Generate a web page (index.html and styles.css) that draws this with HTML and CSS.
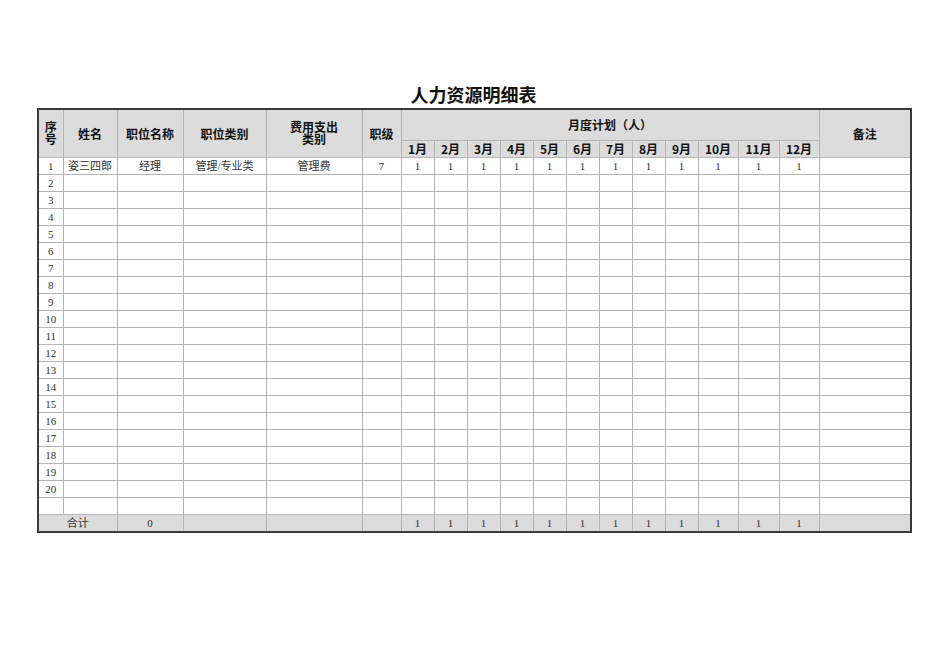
FILE: index.html
```html
<!DOCTYPE html>
<html lang="zh">
<head>
<meta charset="utf-8">
<title>人力资源明细表</title>
<link rel="stylesheet" href="styles.css">
</head>
<body>
<div class="page">
  <h1 class="title">人力资源明细表</h1>
  <table class="sheet">
    <colgroup>
      <col class="c-no"><col class="c-name"><col class="c-pos"><col class="c-cat"><col class="c-fee"><col class="c-lvl">
      <col class="c-m"><col class="c-m"><col class="c-m"><col class="c-m"><col class="c-m"><col class="c-m"><col class="c-m"><col class="c-m"><col class="c-m">
      <col class="c-m2"><col class="c-m3"><col class="c-m2">
      <col class="c-note">
    </colgroup>
    <thead>
      <tr class="h1">
        <th rowspan="2" class="tight">序<br>号</th>
        <th rowspan="2">姓名</th>
        <th rowspan="2">职位名称</th>
        <th rowspan="2">职位类别</th>
        <th rowspan="2" class="tight">费用支出<br>类别</th>
        <th rowspan="2">职级</th>
        <th colspan="12">月度计划（人）</th>
        <th rowspan="2">备注</th>
      </tr>
      <tr class="h2">
        <th>1月</th><th>2月</th><th>3月</th><th>4月</th><th>5月</th><th>6月</th><th>7月</th><th>8月</th><th>9月</th><th>10月</th><th>11月</th><th>12月</th>
      </tr>
    </thead>
    <tbody>
      <tr><td>1</td><td>姿三四郎</td><td>经理</td><td>管理/专业类</td><td>管理费</td><td>7</td><td>1</td><td>1</td><td>1</td><td>1</td><td>1</td><td>1</td><td>1</td><td>1</td><td>1</td><td>1</td><td>1</td><td>1</td><td></td></tr>
      <tr><td>2</td><td></td><td></td><td></td><td></td><td></td><td></td><td></td><td></td><td></td><td></td><td></td><td></td><td></td><td></td><td></td><td></td><td></td><td></td></tr>
      <tr><td>3</td><td></td><td></td><td></td><td></td><td></td><td></td><td></td><td></td><td></td><td></td><td></td><td></td><td></td><td></td><td></td><td></td><td></td><td></td></tr>
      <tr><td>4</td><td></td><td></td><td></td><td></td><td></td><td></td><td></td><td></td><td></td><td></td><td></td><td></td><td></td><td></td><td></td><td></td><td></td><td></td></tr>
      <tr><td>5</td><td></td><td></td><td></td><td></td><td></td><td></td><td></td><td></td><td></td><td></td><td></td><td></td><td></td><td></td><td></td><td></td><td></td><td></td></tr>
      <tr><td>6</td><td></td><td></td><td></td><td></td><td></td><td></td><td></td><td></td><td></td><td></td><td></td><td></td><td></td><td></td><td></td><td></td><td></td><td></td></tr>
      <tr><td>7</td><td></td><td></td><td></td><td></td><td></td><td></td><td></td><td></td><td></td><td></td><td></td><td></td><td></td><td></td><td></td><td></td><td></td><td></td></tr>
      <tr><td>8</td><td></td><td></td><td></td><td></td><td></td><td></td><td></td><td></td><td></td><td></td><td></td><td></td><td></td><td></td><td></td><td></td><td></td><td></td></tr>
      <tr><td>9</td><td></td><td></td><td></td><td></td><td></td><td></td><td></td><td></td><td></td><td></td><td></td><td></td><td></td><td></td><td></td><td></td><td></td><td></td></tr>
      <tr><td>10</td><td></td><td></td><td></td><td></td><td></td><td></td><td></td><td></td><td></td><td></td><td></td><td></td><td></td><td></td><td></td><td></td><td></td><td></td></tr>
      <tr><td>11</td><td></td><td></td><td></td><td></td><td></td><td></td><td></td><td></td><td></td><td></td><td></td><td></td><td></td><td></td><td></td><td></td><td></td><td></td></tr>
      <tr><td>12</td><td></td><td></td><td></td><td></td><td></td><td></td><td></td><td></td><td></td><td></td><td></td><td></td><td></td><td></td><td></td><td></td><td></td><td></td></tr>
      <tr><td>13</td><td></td><td></td><td></td><td></td><td></td><td></td><td></td><td></td><td></td><td></td><td></td><td></td><td></td><td></td><td></td><td></td><td></td><td></td></tr>
      <tr><td>14</td><td></td><td></td><td></td><td></td><td></td><td></td><td></td><td></td><td></td><td></td><td></td><td></td><td></td><td></td><td></td><td></td><td></td><td></td></tr>
      <tr><td>15</td><td></td><td></td><td></td><td></td><td></td><td></td><td></td><td></td><td></td><td></td><td></td><td></td><td></td><td></td><td></td><td></td><td></td><td></td></tr>
      <tr><td>16</td><td></td><td></td><td></td><td></td><td></td><td></td><td></td><td></td><td></td><td></td><td></td><td></td><td></td><td></td><td></td><td></td><td></td><td></td></tr>
      <tr><td>17</td><td></td><td></td><td></td><td></td><td></td><td></td><td></td><td></td><td></td><td></td><td></td><td></td><td></td><td></td><td></td><td></td><td></td><td></td></tr>
      <tr><td>18</td><td></td><td></td><td></td><td></td><td></td><td></td><td></td><td></td><td></td><td></td><td></td><td></td><td></td><td></td><td></td><td></td><td></td><td></td></tr>
      <tr><td>19</td><td></td><td></td><td></td><td></td><td></td><td></td><td></td><td></td><td></td><td></td><td></td><td></td><td></td><td></td><td></td><td></td><td></td><td></td></tr>
      <tr><td>20</td><td></td><td></td><td></td><td></td><td></td><td></td><td></td><td></td><td></td><td></td><td></td><td></td><td></td><td></td><td></td><td></td><td></td><td></td></tr>
      <tr><td></td><td></td><td></td><td></td><td></td><td></td><td></td><td></td><td></td><td></td><td></td><td></td><td></td><td></td><td></td><td></td><td></td><td></td><td></td></tr>
    </tbody>
    <tfoot>
      <tr class="total"><td colspan="2">合计</td><td>0</td><td></td><td></td><td></td><td>1</td><td>1</td><td>1</td><td>1</td><td>1</td><td>1</td><td>1</td><td>1</td><td>1</td><td>1</td><td>1</td><td>1</td><td></td></tr>
    </tfoot>
  </table>
</div>
</body>
</html>
```

FILE: styles.css
```css
html, body {
  margin: 0;
  padding: 0;
  background: #ffffff;
}

.page {
  padding: 84px 0 0 37px;
  width: 873px;
}

.title {
  margin: 0 0 3px 0;
  height: 21px;
  line-height: 21px;
  font-family: "Noto Sans CJK SC", "Liberation Sans", sans-serif;
  font-size: 18px;
  font-weight: 700;
  text-align: center;
  color: #111;
}

.sheet {
  width: 873px;
  table-layout: fixed;
  border-collapse: collapse;
  border: 2px solid #3a3a3a;
  color: #222;
}

.c-no { width: 25px; }
.c-name { width: 54px; }
.c-pos { width: 66px; }
.c-cat { width: 83px; }
.c-fee { width: 96px; }
.c-lvl { width: 39px; }
.c-m { width: 33px; }
.c-m2 { width: 40px; }
.c-m3 { width: 41px; }
.c-note { width: 92px; }

.sheet th,
.sheet td {
  border: 1px solid #b4b4b4;
  padding: 0;
  text-align: center;
  vertical-align: middle;
  overflow: hidden;
  white-space: nowrap;
}

.sheet th {
  background: #dcdcdc;
  font-family: "Noto Sans CJK SC", "Liberation Sans", sans-serif;
  font-weight: 700;
  font-size: 12px;
  line-height: 13px;
  color: #111;
}

.sheet th.tight {
  line-height: 12px;
}

.h1 {
  height: 31px;
}

.h2 {
  height: 17px;
}

.sheet td {
  height: 16px;
  font-family: "Liberation Serif", "Noto Sans CJK SC", serif;
  font-size: 11px;
  line-height: 14px;
  color: #333;
}

.total td {
  background: #dcdcdc;
}
```
